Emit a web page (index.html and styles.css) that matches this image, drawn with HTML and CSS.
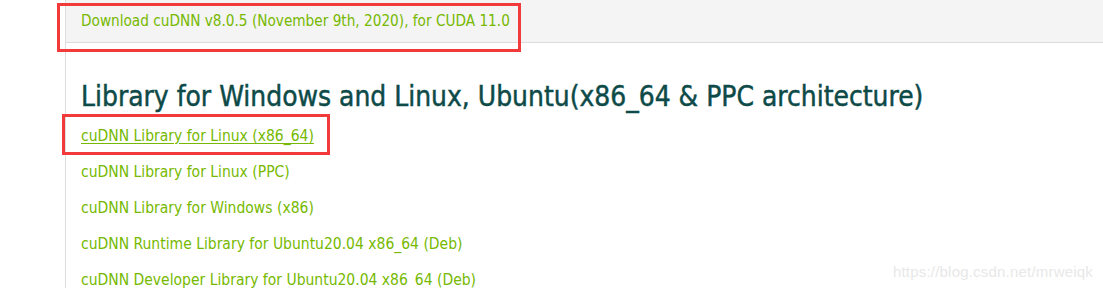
FILE: index.html
```html
<!DOCTYPE html>
<html lang="en">
<head>
<meta charset="utf-8">
<title>cuDNN Download</title>
<link rel="stylesheet" href="styles.css">
</head>
<body>
<div class="page">
  <div class="panel">
    <div class="band">
      <a class="link link-band" href="#">Download cuDNN v8.0.5 (November 9th, 2020), for CUDA 11.0</a>
    </div>
    <div class="content">
      <h2 class="title">Library for Windows and Linux, Ubuntu(x86_64 &amp; PPC architecture)</h2>
      <ul class="list">
        <li><a class="link hover" href="#">cuDNN Library for Linux (x86_64)</a></li>
        <li><a class="link" href="#">cuDNN Library for Linux (PPC)</a></li>
        <li><a class="link" href="#">cuDNN Library for Windows (x86)</a></li>
        <li><a class="link" href="#">cuDNN Runtime Library for Ubuntu20.04 x86_64 (Deb)</a></li>
        <li><a class="link" href="#">cuDNN Developer Library for Ubuntu20.04 x86_64 (Deb)</a></li>
      </ul>
    </div>
  </div>
  <div class="mark mark-top"></div>
  <div class="mark mark-link"></div>
  <div class="watermark">https://blog.csdn.net/mrweiqk</div>
</div>
</body>
</html>
```
FILE: styles.css
```css
html, body {
  margin: 0;
  padding: 0;
  background: #ffffff;
}
body {
  font-family: "DejaVu Sans Condensed", "DejaVu Sans", sans-serif;
  width: 1103px;
  height: 288px;
  overflow: hidden;
}
.page {
  position: relative;
  height: 288px;
  padding-left: 65px;
}
.panel {
  border-left: 1px solid #dddddd;
  height: 288px;
}
.band {
  height: 42px;
  line-height: 42px;
  background: #f4f4f4;
  border-bottom: 1px solid #dcdcdc;
  padding-left: 15px;
}
.link {
  font-size: 15.5px;
  color: #76b900;
  text-decoration: none;
  white-space: nowrap;
}
.link-band {
  font-size: 15.2px;
}
.link.hover {
  text-decoration: underline;
  text-underline-offset: 2px;
  text-decoration-thickness: 1px;
}
.content {
  padding-left: 15px;
}
.title {
  margin: 37px 0 0;
  font-size: 27.9px;
  line-height: 34px;
  font-weight: normal;
  color: #0d4a48;
  -webkit-text-stroke: 0.45px #0d4a48;
  white-space: nowrap;
}
.list {
  list-style: none;
  margin: 4px 0 0;
  padding: 0;
}
.list li {
  height: 36px;
  line-height: 36px;
}
.mark {
  position: absolute;
  border: 3px solid #f23a3a;
  box-sizing: border-box;
}
.mark-top {
  left: 57px;
  top: 3px;
  width: 464px;
  height: 49px;
}
.mark-link {
  left: 62px;
  top: 114px;
  width: 268px;
  height: 41px;
}
.watermark {
  position: absolute;
  right: 10px;
  bottom: 8px;
  font-family: "Liberation Sans", Arial, sans-serif;
  font-size: 15px;
  color: #e8e8e8;
  letter-spacing: 0.2px;
}
```
